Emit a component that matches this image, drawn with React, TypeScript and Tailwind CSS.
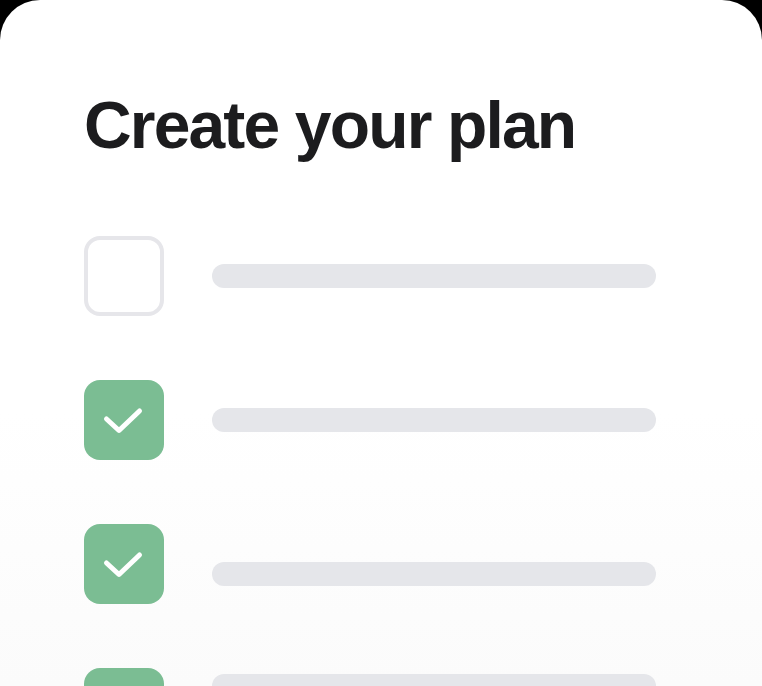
const rows = [
  { checked: false, shift: "" },
  { checked: true, shift: "" },
  { checked: true, shift: "translate-y-[10px]" },
  { checked: true, shift: "-translate-y-[22px]" },
];

function Box({ checked }: { checked: boolean }) {
  if (!checked) {
    return <div className="h-20 w-20 shrink-0 rounded-[16px] border-[4px] border-[#e6e6ea] bg-white" />;
  }
  return (
    <div className="flex h-20 w-20 shrink-0 items-center justify-center rounded-[16px] bg-[#7bbd93]">
      <svg width="80" height="80" viewBox="0 0 80 80" fill="none">
        <path
          d="M22.5 39 L35 50.5 L55.5 31"
          stroke="white"
          strokeWidth="5"
          strokeLinecap="round"
          strokeLinejoin="round"
        />
      </svg>
    </div>
  );
}

export default function App() {
  return (
    <div className="h-[686px] w-[762px] overflow-hidden bg-black">
      <div className="h-full rounded-t-[40px] bg-gradient-to-b from-white from-60% to-[#fbfbfb] pl-[84px] pt-[92px]">
        <h1
          className="text-[66px] font-bold leading-none tracking-[-0.028em] text-[#1c1c1e]"
          style={{ fontFamily: '"Liberation Sans", Arial, sans-serif' }}
        >
          Create your plan
        </h1>
        <div className="mt-[78px] flex flex-col gap-16">
          {rows.map((row, i) => (
            <div key={i} className="flex items-center gap-12">
              <Box checked={row.checked} />
              <div className={`h-6 w-[444px] rounded-full bg-[#e5e6ea] ${row.shift}`} />
            </div>
          ))}
        </div>
      </div>
    </div>
  );
}
